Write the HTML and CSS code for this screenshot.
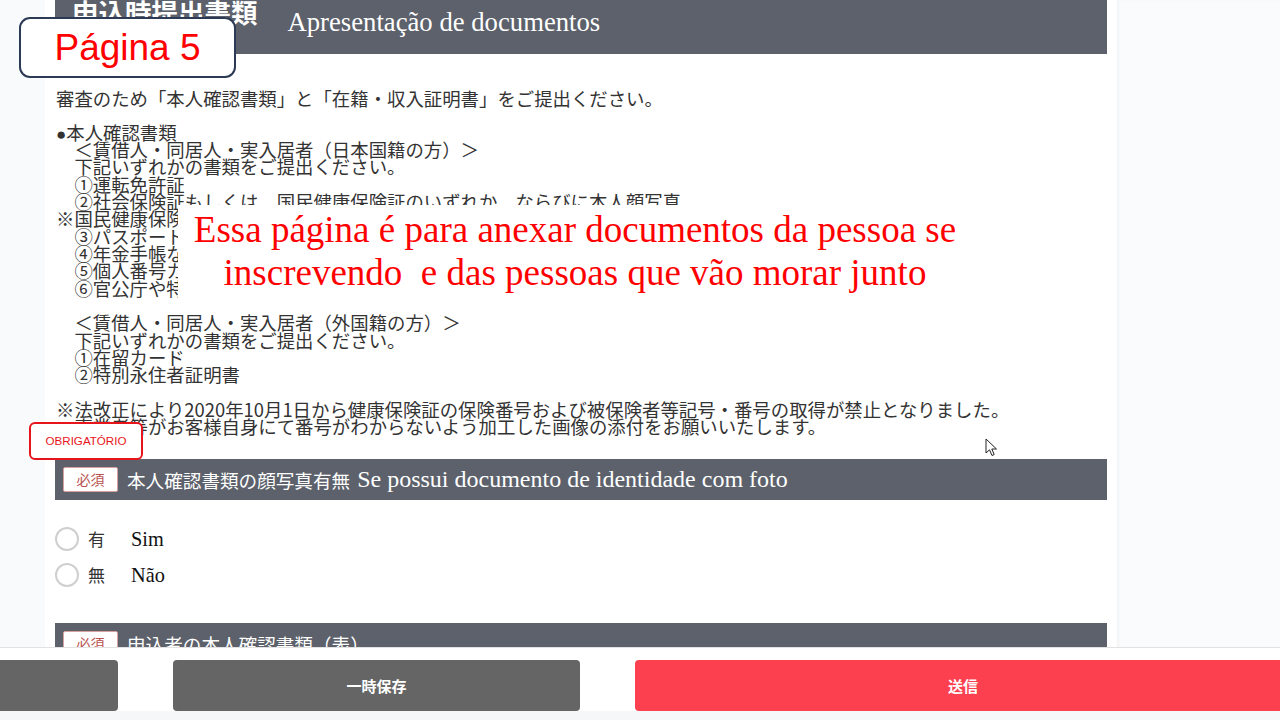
FILE: index.html
```html
<!DOCTYPE html>
<html lang="ja">
<head>
    <meta charset="UTF-8">
    <meta name="viewport" content="width=device-width, initial-scale=1.0">
    <title>申込時提出書類</title>
    <link rel="stylesheet" href="styles.css">
</head>
<body>
    <div class="layout">
        <div class="side"></div>

        <main class="panel">
            <!-- Section title -->
            <div class="section-head">
                <h2>申込時提出書類</h2>
                <span class="pt-title">Apresentação de documentos</span>
            </div>

            <p class="lead">審査のため「本人確認書類」と「在籍・収入証明書」をご提出ください。</p>

            <p class="notes"><span class="dot">●</span>本人確認書類<br>
　＜賃借人・同居人・実入居者（日本国籍の方）＞<br>
　下記いずれかの書類をご提出ください。<br>
　①運転免許証<br>
　②社会保険証もしくは、国民健康保険証のいずれか、ならびに本人顔写真<br>
※国民健康保険証の場合は住民票も併せてご提出ください。<br>
　③パスポート（顔写真付き）<br>
　④年金手帳など公的機関が発行したもの<br>
　⑤個人番号カード（マイナンバーカード）<br>
　⑥官公庁や特殊法人等が発行した身分証明書<br>
<br>
　＜賃借人・同居人・実入居者（外国籍の方）＞<br>
　下記いずれかの書類をご提出ください。<br>
　①在留カード<br>
　②特別永住者証明書<br>
<br>
※法改正により2020年10月1日から健康保険証の保険番号および被保険者等記号・番号の取得が禁止となりました。<br>
・事業者等がお客様自身にて番号がわからないよう加工した画像の添付をお願いいたします。</p>

            <!-- Question: photo on ID -->
            <div class="field-head">
                <span class="badge">必須</span>
                <span class="field-label">本人確認書類の顔写真有無</span>
                <span class="field-pt">Se possui documento de identidade com foto</span>
            </div>

            <div class="radios">
                <label class="radio-row">
                    <span class="radio"></span>
                    <span class="radio-jp">有</span>
                    <span class="radio-pt">Sim</span>
                </label>
                <label class="radio-row">
                    <span class="radio"></span>
                    <span class="radio-jp">無</span>
                    <span class="radio-pt">Não</span>
                </label>
            </div>

            <div class="field-head next">
                <span class="badge">必須</span>
                <span class="field-label">申込者の本人確認書類（表）</span>
            </div>
        </main>

        <div class="side side-right"></div>
    </div>

    <!-- Video annotations -->
    <div class="page-tag">Página 5</div>
    <div class="caption">Essa página é para anexar documentos da pessoa se<br>inscrevendo&nbsp; e das pessoas que vão morar junto</div>
    <div class="required-tag">OBRIGATÓRIO</div>

    <svg class="cursor" width="14" height="20" viewBox="0 0 14 20">
        <path d="M1 1 L1 15 L4.5 11.8 L7 17.5 L9.2 16.5 L6.8 11 L11.5 11 Z" fill="#fff" stroke="#222" stroke-width="1" stroke-linejoin="round"/>
    </svg>

    <!-- Footer actions -->
    <div class="actions">
        <button class="btn btn-back">戻る</button>
        <button class="btn btn-save">一時保存</button>
        <button class="btn btn-send">送信</button>
    </div>
</body>
</html>
```

FILE: styles.css
```css
body {
    margin: 0;
    font-family: "Noto Sans CJK JP", "Noto Sans", sans-serif;
    background: #f9fafb;
    color: #333;
    height: 720px;
    overflow: hidden;
}

.layout {
    display: flex;
    height: 720px;
}

.side {
    width: 45px;
    flex-shrink: 0;
    background: #f9fafb;
}

.side-right {
    flex: 1;
    background: #fafbfc;
    box-shadow: inset 2px 0 3px rgba(0, 0, 0, 0.03);
}

.panel {
    width: 1052px;
    padding: 0 10px;
    background: #fff;
}

.section-head {
    display: flex;
    align-items: flex-start;
    gap: 30px;
    height: 70px;
    margin-top: -16px;
    padding-left: 17px;
    background: #5c616b;
    color: #fff;
}

.section-head h2 {
    margin: 15px 0 0;
    font-size: 26.5px;
    line-height: 26px;
    font-weight: bold;
}

.pt-title {
    margin-top: 23px;
    font-family: "Liberation Serif", serif;
    font-size: 26.7px;
    line-height: 30px;
}

.lead {
    margin: 36px 0 0 1px;
    font-size: 18.4px;
    line-height: 17.5px;
}

.notes {
    margin: 16px 0 0 1px;
    font-size: 18.4px;
    line-height: 17.35px;
    white-space: nowrap;
}

.notes .dot {
    font-family: "Liberation Sans", sans-serif;
    font-size: 17px;
    line-height: 0;
}

.field-head {
    display: flex;
    align-items: center;
    height: 41px;
    margin-top: 23px;
    padding-left: 8px;
    background: #5c616b;
    color: #fff;
}

.field-head.next {
    margin-top: 30px;
}

.badge {
    width: 53px;
    height: 23px;
    margin-right: 9px;
    border: 1px solid #d9a0a0;
    border-radius: 2px;
    background: #fff;
    color: #b9524f;
    font-size: 14px;
    line-height: 23px;
    text-align: center;
}

.field-label {
    font-size: 18.6px;
}

.field-pt {
    margin-left: 7px;
    font-family: "Liberation Serif", serif;
    font-size: 24px;
}

.radios {
    display: flex;
    flex-direction: column;
    margin-top: 21px;
}

.radio-row {
    display: flex;
    align-items: center;
    height: 36px;
}

.radio {
    width: 20px;
    height: 20px;
    border: 2px solid #cfcfcf;
    border-radius: 50%;
    background: #fff;
}

.radio-jp {
    margin-left: 9px;
    width: 43px;
    font-size: 17px;
}

.radio-pt {
    margin-top: 2px;
    font-family: "Liberation Serif", serif;
    font-size: 20.3px;
    color: #111;
}

/* annotations laid over the page */
.page-tag {
    position: absolute;
    left: 19px;
    top: 17px;
    width: 213px;
    height: 57px;
    border: 2px solid #2c3a55;
    border-radius: 11px;
    background: #fff;
    color: #ff0000;
    font-family: "Liberation Sans", Arial, sans-serif;
    font-size: 37px;
    line-height: 57px;
    text-align: center;
}

.caption {
    position: absolute;
    left: 178px;
    top: 205px;
    width: 794px;
    height: 95px;
    padding-top: 3px;
    background: #fff;
    color: #ff0000;
    font-family: "Liberation Serif", serif;
    font-size: 37px;
    line-height: 43px;
    text-align: center;
    white-space: nowrap;
}

.required-tag {
    position: absolute;
    left: 29px;
    top: 422px;
    width: 110px;
    height: 34px;
    border: 2px solid #e8141b;
    border-radius: 6px;
    background: #fff;
    color: #e8141b;
    font-family: "Liberation Sans", Arial, sans-serif;
    font-size: 11.6px;
    line-height: 34px;
    text-align: center;
}

.cursor {
    position: absolute;
    left: 985px;
    top: 438px;
}

.actions {
    position: fixed;
    left: 0;
    right: 0;
    bottom: 0;
    height: 73px;
    display: flex;
    gap: 55px;
    padding-top: 12px;
    box-sizing: border-box;
    background: #fff;
    border-top: 1px solid #e2e2e2;
    box-shadow: inset 0 -9px 0 #f6f7f8;
}

.btn {
    height: 51px;
    border: none;
    border-radius: 4px;
    color: #fff;
    font-family: "Noto Sans CJK JP", sans-serif;
    font-size: 15px;
    font-weight: bold;
    flex-shrink: 0;
}

.btn-back {
    width: 407px;
    margin-left: -289px;
    background: #656565;
    color: #656565;
}

.btn-save {
    width: 407px;
    background: #656565;
}

.btn-send {
    width: 660px;
    padding-right: 10px;
    background: #fd4050;
}
```
